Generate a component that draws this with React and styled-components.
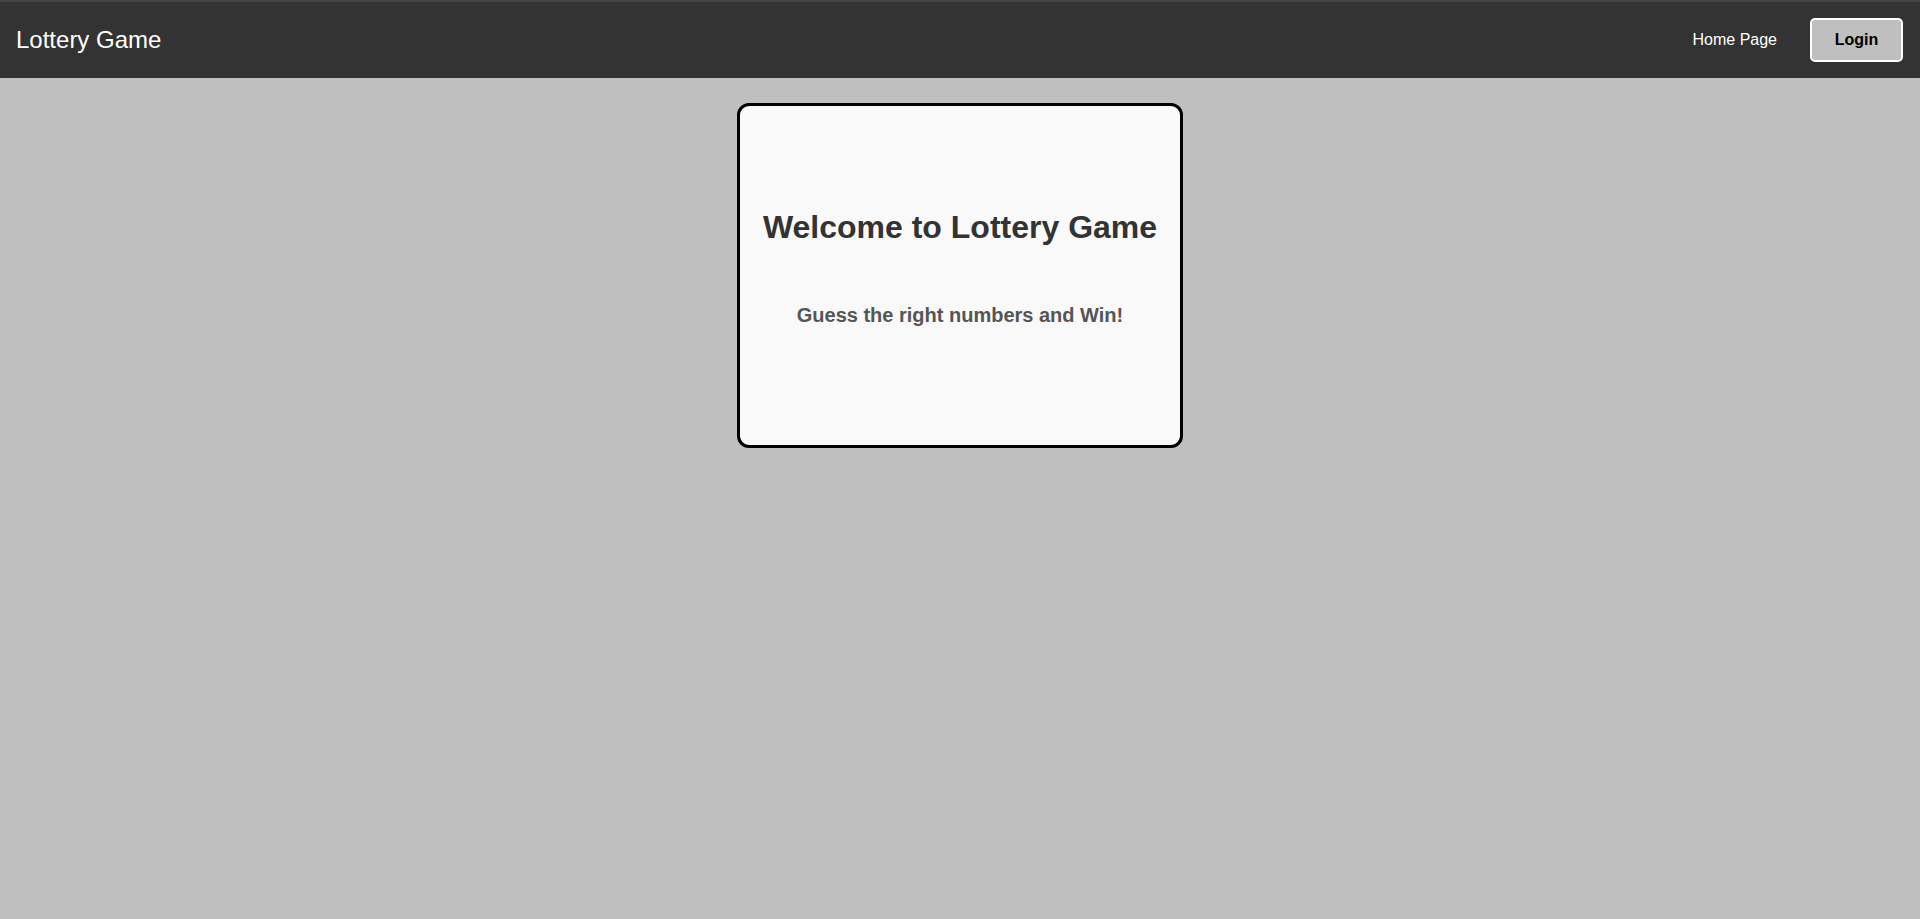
import React from 'react';
import styled, { createGlobalStyle } from 'styled-components';

const GlobalStyle = createGlobalStyle`
  html, body {
    margin: 0;
    padding: 0;
    background-color: #bfbfbf;
    font-family: "Liberation Sans", Arial, sans-serif;
  }
  body {
    min-height: 919px;
  }
`;

const Navbar = styled.nav`
  display: flex;
  align-items: center;
  justify-content: space-between;
  height: 76px;
  padding: 0 17px 0 16px;
  background-color: #333333;
  border-top: 2px solid #454545;
`;

const Brand = styled.div`
  color: #ffffff;
  font-size: 24px;
`;

const NavLinks = styled.div`
  display: flex;
  align-items: center;
  gap: 33px;
`;

const NavLink = styled.a`
  color: #ffffff;
  font-size: 16px;
  text-decoration: none;
  cursor: pointer;
`;

const LoginButton = styled.button`
  box-sizing: border-box;
  width: 93px;
  height: 44px;
  background-color: #bfbfbf;
  color: #000000;
  border: 2px solid #ffffff;
  border-radius: 5px;
  font-family: "Liberation Sans", Arial, sans-serif;
  font-size: 16px;
  font-weight: bold;
  cursor: pointer;
`;

const Main = styled.main`
  display: flex;
  justify-content: center;
  padding-top: 25px;
`;

const WelcomeCard = styled.section`
  box-sizing: border-box;
  width: 446px;
  height: 345px;
  padding: 103px 20px 0;
  background-color: #f9f9f9;
  border: 3px solid #000000;
  border-radius: 12px;
  display: flex;
  flex-direction: column;
  align-items: center;
  gap: 58px;
  text-align: center;
`;

const Heading = styled.h1`
  margin: 0;
  font-size: 32px;
  font-weight: bold;
  color: #333333;
`;

const Subtitle = styled.h3`
  margin: 0;
  font-size: 20px;
  font-weight: bold;
  color: #555555;
`;

const App = () => {
  return (
    <>
      <GlobalStyle />
      <Navbar>
        <Brand>Lottery Game</Brand>
        <NavLinks>
          <NavLink>Home Page</NavLink>
          <LoginButton>Login</LoginButton>
        </NavLinks>
      </Navbar>
      <Main>
        <WelcomeCard>
          <Heading>Welcome to Lottery Game</Heading>
          <Subtitle>Guess the right numbers and Win!</Subtitle>
        </WelcomeCard>
      </Main>
    </>
  );
};

export default App;
